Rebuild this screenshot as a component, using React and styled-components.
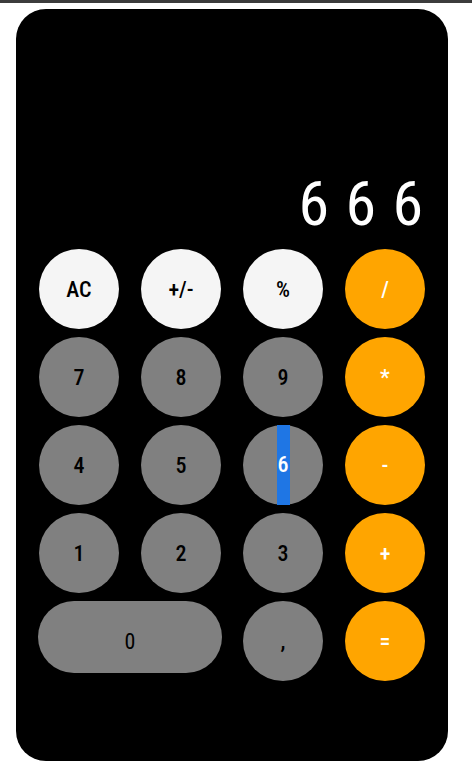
import React from 'react';
import styled, { createGlobalStyle } from 'styled-components';

const GlobalStyle = createGlobalStyle`
  html, body {
    margin: 0;
    padding: 0;
    background: #ffffff;
  }
  body {
    font-family: Roboto, "Liberation Sans", sans-serif;
  }
`;

const TopBar = styled.div`
  height: 3px;
  background: #3c3c3c;
`;

const Page = styled.div`
  padding: 6px 24px 20px 16px;
`;

const Calculator = styled.div`
  width: 432px;
  height: 752px;
  box-sizing: border-box;
  background: #000000;
  border-radius: 30px;
  padding: 0 23px;
  display: flex;
  flex-direction: column;
`;

const Display = styled.div`
  height: 240px;
  display: flex;
  align-items: flex-end;
  justify-content: flex-end;
  box-sizing: border-box;
  padding: 0 2px 14px 0;
  color: #ffffff;
  font-family: Roboto, "DejaVu Sans Condensed", sans-serif;
  font-stretch: condensed;
  font-weight: 400;
  font-size: 62px;
  line-height: 1;
`;

const Digit = styled.span`
  display: inline-block;
  width: 47px;
  text-align: right;
`;

const Keys = styled.div`
  display: grid;
  grid-template-columns: repeat(4, 80px);
  grid-auto-rows: 80px;
  column-gap: 22px;
  row-gap: 8px;
`;

const palette = {
  light: { bg: '#f5f5f5', fg: '#000000' },
  gray: { bg: '#808080', fg: '#000000' },
  orange: { bg: '#ffa500', fg: '#ffffff' },
};

const Key = styled.button`
  border: none;
  box-sizing: border-box;
  padding: ${props => (props.wide ? '8px 0 0' : '0')};
  margin: 0 ${props => (props.wide ? '-1px' : '0')};
  width: ${props => (props.wide ? 'calc(100% + 2px)' : '100%')};
  height: ${props => (props.wide ? '72px' : '80px')};
  grid-column: ${props => (props.wide ? 'span 2' : 'auto')};
  border-radius: 40px;
  background: ${props => palette[props.kind].bg};
  color: ${props => palette[props.kind].fg};
  font-family: Roboto, "DejaVu Sans Condensed", sans-serif;
  font-stretch: condensed;
  font-weight: ${props => (props.wide ? 400 : 500)};
  font-size: 22px;
  display: flex;
  align-items: center;
  justify-content: center;
  cursor: pointer;
`;

const Selected = styled.span`
  display: inline-block;
  height: 80px;
  line-height: 80px;
  padding: 0 1px;
  background: #1f76e4;
  color: #ffffff;
`;

const keys = [
  ['AC', 'light'], ['+/-', 'light'], ['%', 'light'], ['/', 'orange'],
  ['7', 'gray'], ['8', 'gray'], ['9', 'gray'], ['*', 'orange'],
  ['4', 'gray'], ['5', 'gray'], ['6', 'gray', 'selected'], ['-', 'orange'],
  ['1', 'gray'], ['2', 'gray'], ['3', 'gray'], ['+', 'orange'],
  ['0', 'gray', 'wide'], [',', 'gray'], ['=', 'orange'],
];

export default function App() {
  return (
    <>
      <GlobalStyle />
      <TopBar />
      <Page>
        <Calculator>
          <Display>
            <Digit>6</Digit>
            <Digit>6</Digit>
            <Digit>6</Digit>
          </Display>
          <Keys>
            {keys.map(([label, kind, flag]) => (
              <Key key={label} kind={kind} wide={flag === 'wide'}>
                {flag === 'selected' ? <Selected>{label}</Selected> : label}
              </Key>
            ))}
          </Keys>
        </Calculator>
      </Page>
    </>
  );
}
